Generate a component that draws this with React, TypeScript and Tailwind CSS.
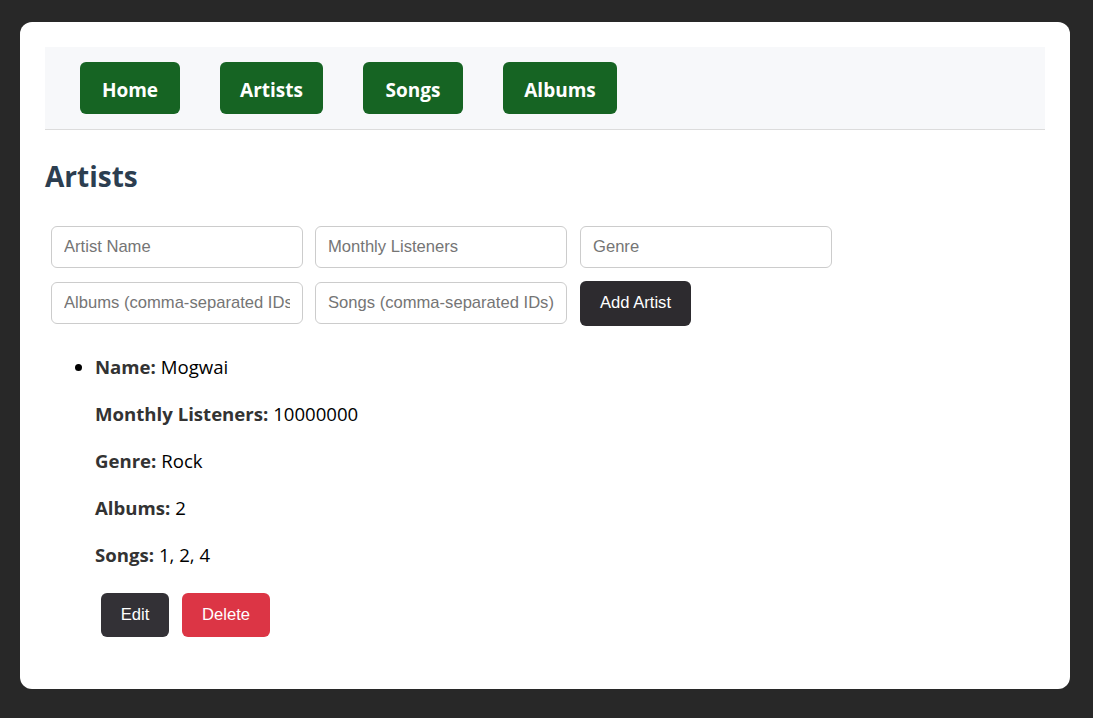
const NAV: [string, string][] = [
  ["Home", "w-[100px]"],
  ["Artists", "w-[103px]"],
  ["Songs", "w-[100px]"],
  ["Albums", "w-[114px]"],
];

const FIELDS = [
  "Artist Name",
  "Monthly Listeners",
  "Genre",
  "Albums (comma-separated IDs)",
  "Songs (comma-separated IDs)",
];

const DETAILS: [string, string][] = [
  ["Name:", "Mogwai"],
  ["Monthly Listeners:", "10000000"],
  ["Genre:", "Rock"],
  ["Albums:", "2"],
  ["Songs:", "1, 2, 4"],
];

const sans = "font-['Segoe_UI','Open_Sans',sans-serif]";
const arial = "font-['Liberation_Sans',Arial,sans-serif]";

export default function App() {
  return (
    <div className={`min-h-screen bg-[#282828] px-[20px] pt-[22px] pb-[29px] ${sans}`}>
      <div className="w-[1050px] rounded-[12px] bg-white px-[25px] pt-[25px] pb-[52px]">
        <nav className="flex border-b border-[#dcdcdc] bg-[#f7f8fa] px-[35px] py-[15px] gap-[40px]">
          {NAV.map(([item, w]) => (
            <button
              key={item}
              type="button"
              className={`h-[52px] ${w} rounded-[6px] bg-[#166423] pt-[5px] text-[19px] font-bold text-white`}
            >
              {item}
            </button>
          ))}
        </nav>

        <h1 className="mt-[26px] text-[28px] font-bold leading-[40px] text-[#2c3e50]">Artists</h1>

        <form className="mt-[30px] flex w-[1000px] flex-wrap gap-x-[12px] gap-y-[14px] px-[6px]">
          {FIELDS.map((field, i) => (
            <input
              key={field}
              placeholder={field}
              className={`h-[42px] w-[252px] rounded-[6px] border border-[#cccccc] px-[12px] text-[16.6px] text-[#333] placeholder:text-[#757575] outline-none ${i === 2 ? "ml-[1px]" : ""} ${arial}`}
            />
          ))}
          <button
            type="button"
            className={`-mt-[1px] ml-[1px] h-[45px] w-[111px] rounded-[6px] bg-[#2d2b2f] text-[16.6px] text-white ${arial}`}
          >
            Add Artist
          </button>
        </form>

        <ul className="mt-[27px] list-disc pl-[50px] text-[18.6px] text-black">
          <li className="marker:text-black">
            <div className="flex flex-col gap-[23px] leading-[24px]">
              {DETAILS.map(([label, value]) => (
                <p key={label}>
                  <b className="text-[#333]">{label}</b> {value}
                </p>
              ))}
            </div>
            <div className="mt-[26px] flex gap-[13px] pl-[6px]">
              <button
                type="button"
                className={`h-[44px] w-[68px] rounded-[6px] bg-[#333136] text-[16.6px] text-white ${arial}`}
              >
                Edit
              </button>
              <button
                type="button"
                className={`h-[44px] w-[88px] rounded-[6px] bg-[#dc3545] text-[16.6px] text-white ${arial}`}
              >
                Delete
              </button>
            </div>
          </li>
        </ul>
      </div>
    </div>
  );
}
